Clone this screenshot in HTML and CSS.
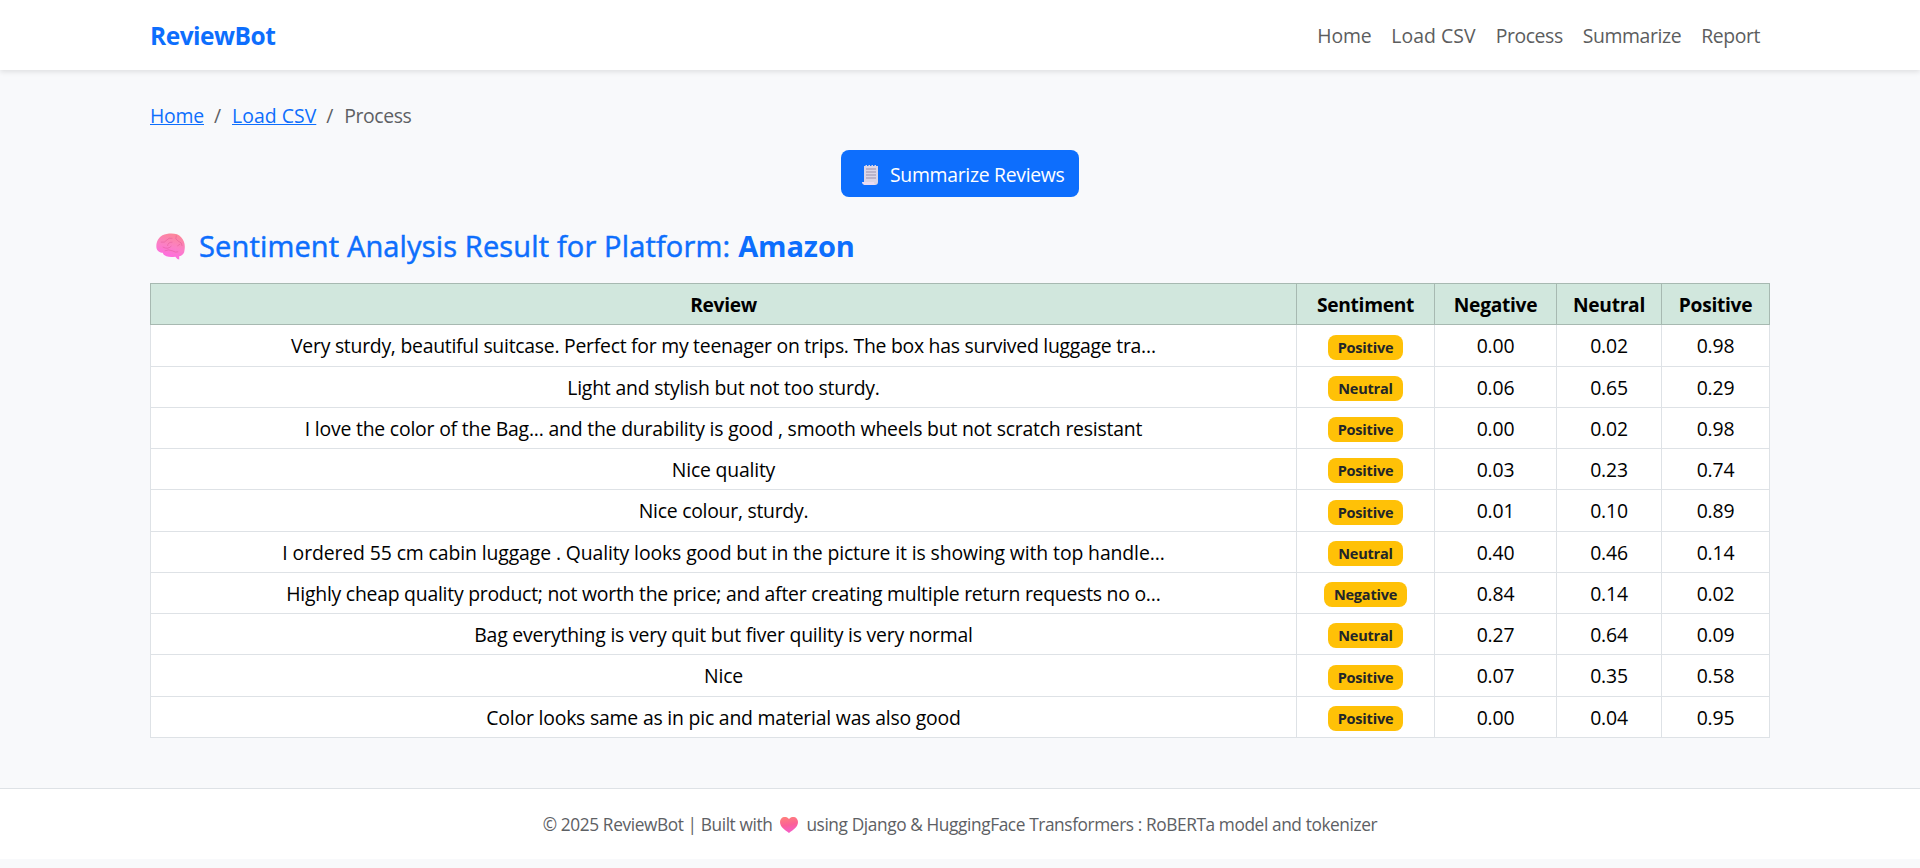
FILE: index.html
```html
<!DOCTYPE html>
<html lang="en">
<head>
<meta charset="utf-8">
<title>ReviewBot</title>
<link rel="stylesheet" href="styles.css">
</head>
<body>
<nav class="navbar"><div class="container navbar-inner">
<a class="brand">ReviewBot</a>
<div class="nav-links"><a>Home</a><a class="csv">Load CSV</a><a class="tight">Process</a><a class="tight">Summarize</a><a class="tight">Report</a></div>
</div></nav>
<main class="container main">
<div class="breadcrumb"><a>Home</a><i>/</i><a class="csv">Load CSV</a><i>/</i><span class="tight">Process</span></div>
<div class="actions"><button class="btn">
<svg class="receipt" viewBox="0 0 17 20"><path d="M2 1h1.500v-1h1.500v1h1.500v-1h1.500v1h1.500v-1h1.500v1h1.500v-1h1.500v1h2v16q0 3-3 3H2z" fill="#dcd5e6"/><path d="M0 17h12q0 3 2 3H3.500Q0 20 0 17z" fill="#eadcf2"/><path d="M4 4h10M4 7h10M4 10h10M4 13h10" stroke="#9a92ab" stroke-width="1.200"/></svg><span>Summarize Reviews</span></button></div>
<h2 class="title"><svg class="brain" viewBox="0 0 30 27"><defs><linearGradient id="b" x1="0.700" y1="0" x2="0.400" y2="1"><stop offset="0" stop-color="#fc8796"/><stop offset=".5" stop-color="#fb80c4"/><stop offset="1" stop-color="#ff68e6"/></linearGradient></defs><path d="M0.500 15C-.5 8 4 1 11 .5C17-.5 23 0 26 4C29 7 30.500 12 29.500 17C29.500 21 27 23 24 23.500L24 27Q22 27 20 24C14 25 8 24 7 20C4 20 1 18 .5 15z" fill="url(#b)"/><path d="M5 9q4 1 6-2q2-3 6-2M17 9q-5 0-5 4M7 14q5 3 9-1M21 2q-2 4 2 6q4 1 4 5M22 13l3-2M9 18q4-2 8 0q3 2 6 1" fill="none" stroke="#dc5593" stroke-width=".8" opacity=".6"/></svg><span class="title-text">Sentiment Analysis Result for Platform:</span><strong>Amazon</strong></h2>
<table class="results">
<colgroup><col class="c1"><col class="c2"><col class="c3"><col class="c4"><col class="c5"></colgroup>
<thead><tr><th>Review</th><th>Sentiment</th><th>Negative</th><th>Neutral</th><th>Positive</th></tr></thead>
<tbody>
<tr><td>Very sturdy, beautiful suitcase. Perfect for my teenager on trips. The box has survived luggage tra…</td><td><span class="badge">Positive</span></td><td>0.00</td><td>0.02</td><td>0.98</td></tr>
<tr><td>Light and stylish but not too sturdy.</td><td><span class="badge">Neutral</span></td><td>0.06</td><td>0.65</td><td>0.29</td></tr>
<tr><td>I love the color of the Bag... and the durability is good , smooth wheels but not scratch resistant</td><td><span class="badge">Positive</span></td><td>0.00</td><td>0.02</td><td>0.98</td></tr>
<tr><td>Nice quality</td><td><span class="badge">Positive</span></td><td>0.03</td><td>0.23</td><td>0.74</td></tr>
<tr><td>Nice colour, sturdy.</td><td><span class="badge">Positive</span></td><td>0.01</td><td>0.10</td><td>0.89</td></tr>
<tr><td>I ordered 55 cm cabin luggage . Quality looks good but in the picture it is showing with top handle…</td><td><span class="badge">Neutral</span></td><td>0.40</td><td>0.46</td><td>0.14</td></tr>
<tr><td>Highly cheap quality product; not worth the price; and after creating multiple return requests no o…</td><td><span class="badge">Negative</span></td><td>0.84</td><td>0.14</td><td>0.02</td></tr>
<tr><td>Bag everything is very quit but fiver quility is very normal</td><td><span class="badge">Neutral</span></td><td>0.27</td><td>0.64</td><td>0.09</td></tr>
<tr><td>Nice</td><td><span class="badge">Positive</span></td><td>0.07</td><td>0.35</td><td>0.58</td></tr>
<tr><td>Color looks same as in pic and material was also good</td><td><span class="badge">Positive</span></td><td>0.00</td><td>0.04</td><td>0.95</td></tr>
</tbody></table>
</main>
<footer class="footer"><span>© 2025 ReviewBot | Built with</span><svg class="heart" viewBox="0 0 18 16"><defs><linearGradient id="h" x1="0.400" y1="0" x2="0.600" y2="1"><stop offset="0" stop-color="#ff7f7c"/><stop offset=".5" stop-color="#fb6098"/><stop offset="1" stop-color="#f35fce"/></linearGradient></defs><path d="M9 16C5 13 0 10 0 5C0 0 6-2 9 2C12-2 18 0 18 5C18 10 13 13 9 16z" fill="url(#h)"/></svg><span>using Django &amp; HuggingFace Transformers : RoBERTa model and tokenizer</span></footer>
</body>
</html>
```
FILE: styles.css
```css
* { box-sizing: border-box; }
body { margin: 0; background: #f8f9fb; font: 19.4px/30px "Open Sans", "Noto Sans", sans-serif; letter-spacing: -0.2px; color: #212529; }
.container { width: 1620px; margin: 0 auto; }
.navbar { height: 70px; background: #fff; box-shadow: 0 2px 5px rgba(0,0,0,.1); }
.navbar-inner { display: flex; justify-content: space-between; align-items: center; height: 100%; padding-top: 2px; }
.brand { color: #0d6efd; font-size: 24.5px; font-weight: 700; letter-spacing: -0.5px; }
.nav-links { display: flex; gap: 20px; padding-right: 10px; color: #5c5d5e; }
.csv { letter-spacing: 0.05px; }
.tight { letter-spacing: -0.4px; }
.main { padding-top: 31px; }
.breadcrumb { display: flex; gap: 10px; color: #5d6064; }
.breadcrumb a { color: #0d6efd; text-decoration: underline; }
.breadcrumb i { width: 8px; font-style: normal; }
.actions { display: flex; justify-content: center; margin-top: 19px; }
.btn { display: flex; align-items: center; gap: 11px; width: 238px; height: 47px; padding: 2px 0 0 21px; border: 0; border-radius: 8px; background: #0d6efd; color: #fff; font: inherit; letter-spacing: -0.3px; white-space: nowrap; }
.receipt { width: 17px; height: 20px; }
.title { display: flex; align-items: center; height: 36px; margin: 31px 0 19px; padding-left: 6px; color: #0d6efd; font-size: 29px; font-weight: 400; letter-spacing: 0.15px; white-space: nowrap; }
.title-text { -webkit-text-stroke: 0.5px #0d6efd; }
.brain { width: 29px; height: 27px; margin-right: 14px; }
.title strong { margin-left: 8px; font-weight: 700; letter-spacing: -0.1px; }
.results { width: 1620px; table-layout: fixed; border-collapse: collapse; background: #fff; color: #000; text-align: center; }
.results th, .results td { height: 41.25px; padding: 2px 0 0; border: 1px solid #dee2e6; line-height: 30px; white-space: nowrap; }
.results td:nth-child(2) { padding-top: 0; }
.results th { background: #d1e7dd; border-color: #a7b9b1; font-size: 19.2px; font-weight: 700; letter-spacing: -0.3px; }
.results tr:nth-child(1) td:first-child, .results tr:nth-child(5) td:first-child { letter-spacing: -0.26px; }
.results tr:nth-child(6) td:first-child { letter-spacing: -0.11px; }
.results tr:nth-child(7) td:first-child { letter-spacing: -0.245px; }
.c1 { width: 1146px; } .c2 { width: 138px; } .c3 { width: 122px; } .c4 { width: 105px; } .c5 { width: 108px; }
.badge { display: inline-block; height: 25px; padding: 0 10px; border-radius: 8px; background: #ffc107; color: #212529; font-size: 14.5px; font-weight: 700; line-height: 26px; vertical-align: middle; }
.footer { display: flex; justify-content: center; align-items: center; height: 71px; margin-top: 50px; padding-top: 2px; border-top: 1px solid #dee2e6; background: #fff; color: #5d6064; font-size: 17.3px; letter-spacing: -0.4px; white-space: nowrap; }
.heart { width: 18px; height: 16px; margin: 0 8px; }
```
